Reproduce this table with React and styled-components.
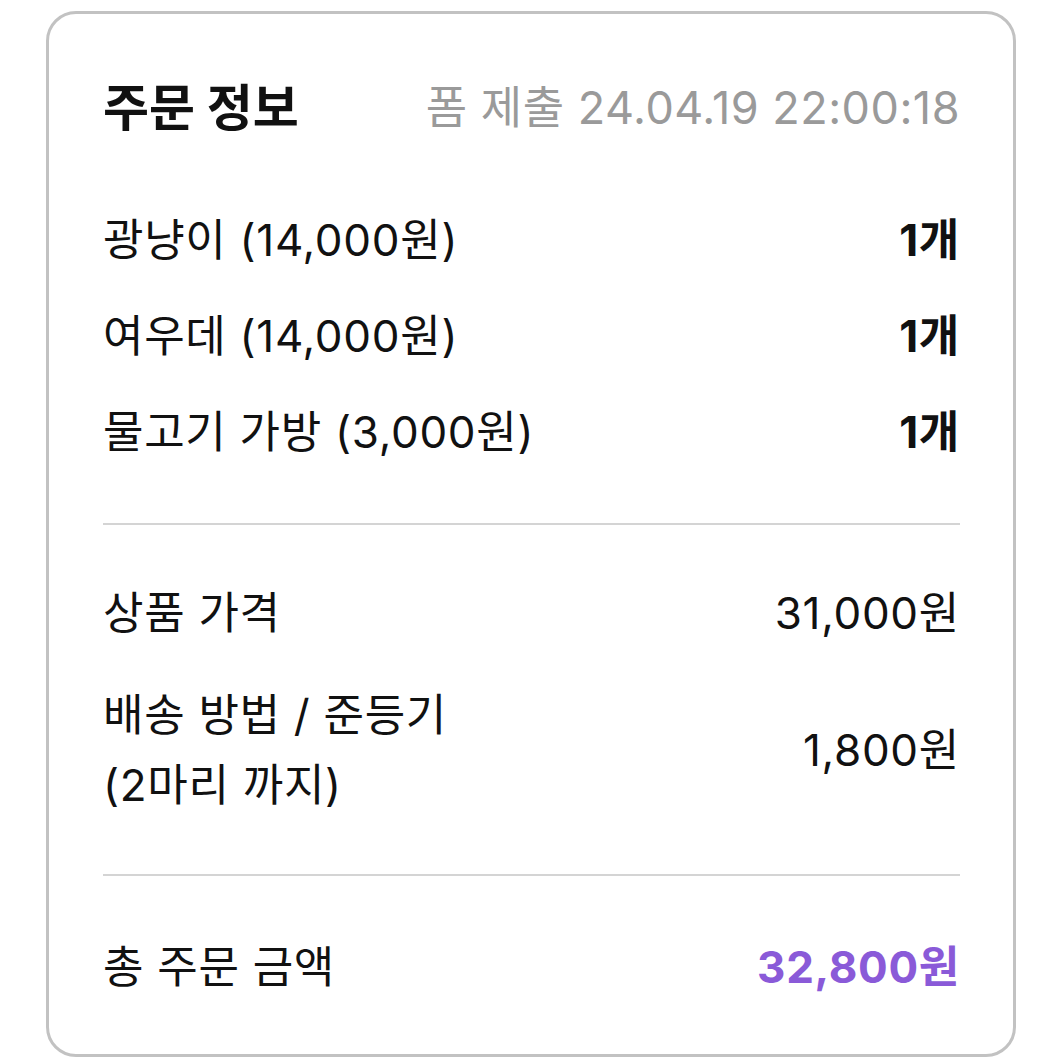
import React from 'react'
import styled, { createGlobalStyle } from 'styled-components'

const GlobalStyle = createGlobalStyle`
  body {
    margin: 0;
    background: #fff;
    font-family: Inter, "Noto Sans CJK KR", sans-serif;
    color: #111;
  }
`

const Card = styled.section`
  box-sizing: border-box;
  width: 970px;
  height: 1046px;
  margin: 11px 0 0 46px;
  padding: 60px 53px 0 54px;
  border: 3px solid #c2c2c2;
  border-radius: 30px;
  background: #fff;
`

const Header = styled.header`
  display: flex;
  justify-content: space-between;
  align-items: center;
  height: 60px;
`

const Title = styled.h1`
  margin: 0;
  font-size: 50px;
  font-weight: 700;
`

const Submitted = styled.span`
  font-size: 45px;
  letter-spacing: 0.5px;
  color: #9a9a9a;
`

const Section = styled.div`
  display: flex;
  flex-direction: column;
  gap: ${p => p.$gap || 0}px;
  padding: ${p => p.$pad};
`

const Row = styled.div`
  display: flex;
  justify-content: space-between;
  align-items: center;
  min-height: ${p => p.$h || 70}px;
  font-size: 44px;
  line-height: 70px;
  letter-spacing: 0.7px;
`

const Label = styled.span`
  white-space: pre-line;
`

const Value = styled.span`
  font-weight: ${p => (p.$bold ? 700 : 400)};
  color: ${p => p.$color || '#111'};
`

const Divider = styled.hr`
  margin: 0;
  border: none;
  height: 2px;
  background: #d4d4d4;
`

const items = [
  { name: '광냥이 (14,000원)', qty: '1개' },
  { name: '여우데 (14,000원)', qty: '1개' },
  { name: '물고기 가방 (3,000원)', qty: '1개' }
]

export default function App() {
  return (
    <>
      <GlobalStyle />
      <Card>
        <Header>
          <Title>주문 정보</Title>
          <Submitted>폼 제출 24.04.19 22:00:18</Submitted>
        </Header>
        <Section $pad="58px 0 43px">
          {items.map(item => (
            <Row key={item.name} $h={96}>
              <Label>{item.name}</Label>
              <Value $bold>{item.qty}</Value>
            </Row>
          ))}
        </Section>
        <Divider />
        <Section $pad="53px 0 54px" $gap={32}>
          <Row>
            <Label>상품 가격</Label>
            <Value>31,000원</Value>
          </Row>
          <Row>
            <Label>{'배송 방법 / 준등기\n(2마리 까지)'}</Label>
            <Value>1,800원</Value>
          </Row>
        </Section>
        <Divider />
        <Section $pad="56px 0 0">
          <Row>
            <Label>총 주문 금액</Label>
            <Value $bold $color="#8a5ad8">32,800원</Value>
          </Row>
        </Section>
      </Card>
    </>
  )
}
